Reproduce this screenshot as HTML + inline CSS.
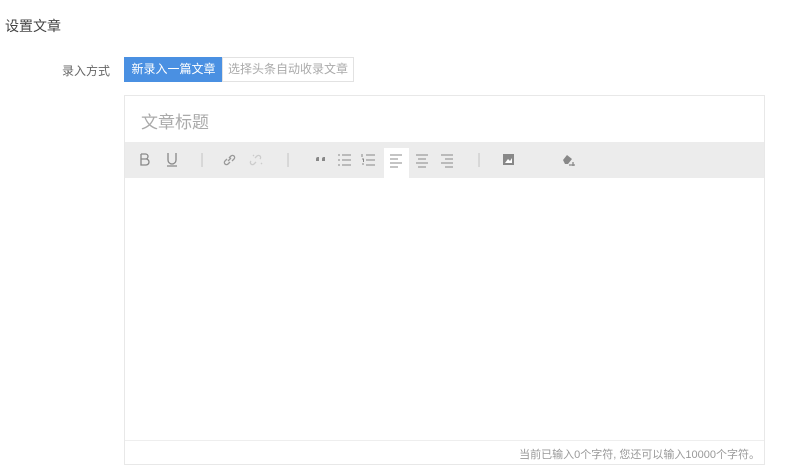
<!DOCTYPE html>
<html><head><meta charset="utf-8"><style>
*{margin:0;padding:0;box-sizing:border-box}
body{width:800px;height:474px;background:#fff;font-family:"Liberation Sans","Noto Sans CJK SC",sans-serif;position:relative;overflow:hidden;color:#333}
.a{position:absolute}
</style></head><body>
<div class="a" style="left:5px;top:16px;font-size:14px;color:#444">设置文章</div>
<div class="a" style="left:60px;top:62px;width:50px;text-align:right;font-size:12px;color:#666">录入方式</div>
<div class="a" style="left:124px;top:57px;width:99px;height:25px;background:#4a90e2;color:#fff;font-size:12px;line-height:25px;text-align:center">新录入一篇文章</div>
<div class="a" style="left:222px;top:57px;width:132px;height:25px;border:1px solid #e2e2e2;color:#aaa;font-size:12px;line-height:23px;text-align:center">选择头条自动收录文章</div>
<div class="a" style="left:124px;top:95px;width:641px;height:370px;border:1px solid #e8e8e8"></div>
<div class="a" style="left:141px;top:108px;font-size:17px;color:#aaa">文章标题</div>
<div class="a" style="left:125px;top:142px;width:639px;height:36px;background:#ececec"></div>
<div class="a" style="left:384px;top:148px;width:25px;height:30px;background:#fff"></div>
<svg class="a" style="left:125px;top:142px" width="640" height="36" fill="none" stroke="#888" stroke-width="1.3">
<path d="M16 12v11h5a3 3 0 0 0 0-6h-5m0 0h4.5a2.5 2.5 0 0 0 0-5H16"/>
<path d="M43 11v7a4 4 0 0 0 8 0v-7M42 24h10"/>
<path d="M77 11v14M163 11v14M354 11v14" stroke="#ccc"/>
<path d="M104 16l2-2a2 2 0 0 1 3 3l-2 2M105 20l-2 2a2 2 0 0 1-3-3l2-2M103 19l3-3" stroke="#999"/>
<path d="M130 16l2-2a2 2 0 0 1 3 3M131 20l-2 2a2 2 0 0 1-3-3M128 13l1 1M137 22l-1-1" stroke="#ccc"/>
<path d="M191 17a2 2 0 0 1 2-2h1v4h-3zM197 17a2 2 0 0 1 2-2h1v4h-3z" fill="#888" stroke="none"/>
<path d="M213 13h2M213 18h2M213 23h2M217 13h9M217 18h9M217 23h9" stroke-width="1"/>
<path d="M237 12v3M237 17h1.5v3M237 22h2M241 13h9M241 18h9M241 23h9" stroke-width="1"/>
<path d="M265 13h12M265 17h8M265 21h12M265 25h8" stroke-width="1"/>
<path d="M291 13h12M293 17h8M291 21h12M293 25h8" stroke-width="1"/>
<path d="M316 13h12M320 17h8M316 21h12M320 25h8" stroke-width="1"/>
<rect x="378" y="12" width="11" height="11" fill="#888" stroke="none"/>
<path d="M380 21l3-4 2 2 2-3v5z" fill="#fff" stroke="none"/>
<path d="M438 18l4-5 5 4-4 5h-3z" fill="#888" stroke="none"/><path d="M444 23h6M448 20v4" stroke="#888"/>
</svg>
<div class="a" style="left:125px;top:440px;width:639px;border-top:1px solid #eee"></div>
<div class="a" style="left:400px;top:446px;width:360px;text-align:right;font-size:11px;color:#999">当前已输入0个字符, 您还可以输入10000个字符。</div>
</body></html>
